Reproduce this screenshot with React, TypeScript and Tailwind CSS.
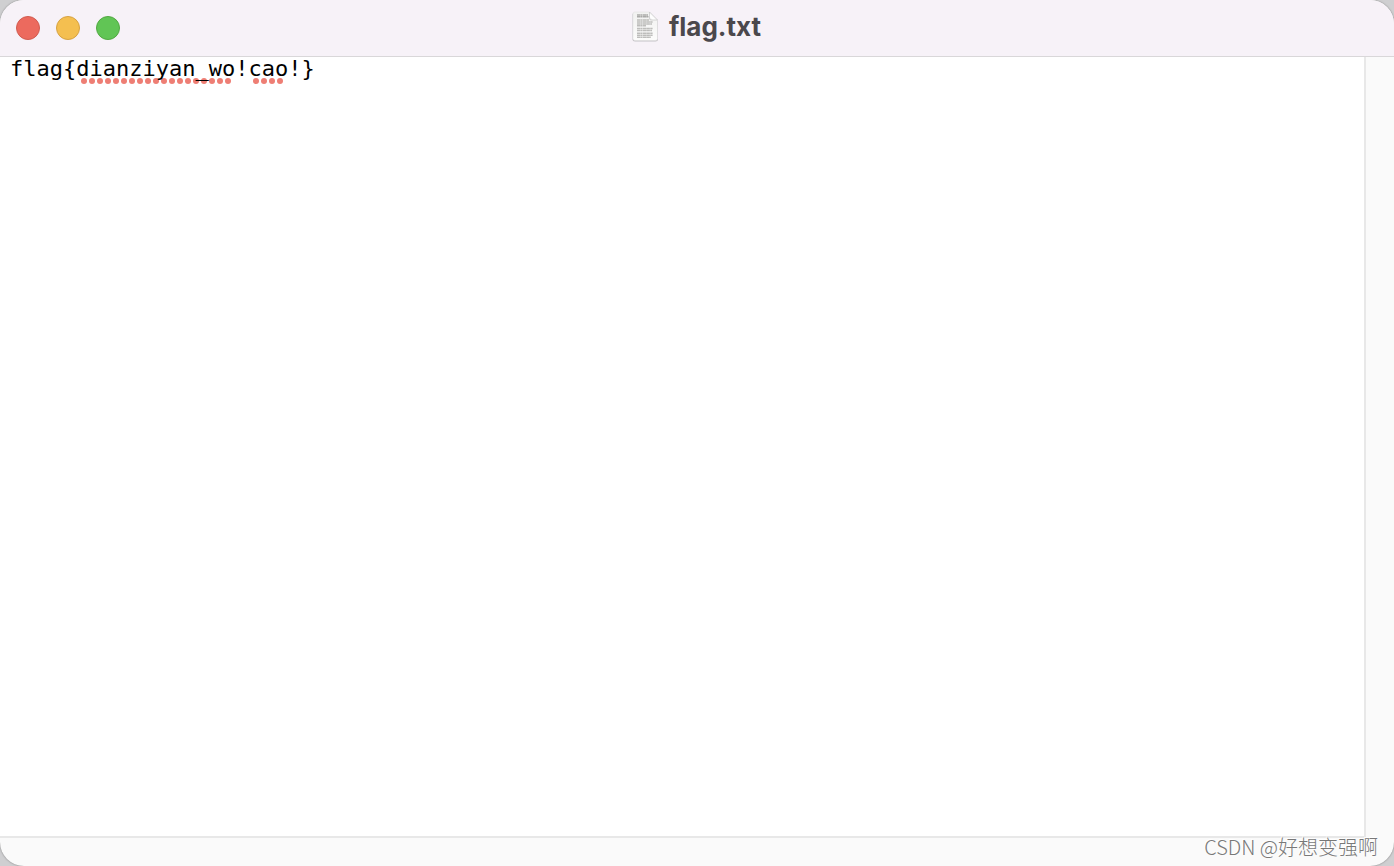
import { useState } from "react";

const lights = [
  { label: "Close", style: "bg-[#ec6a5e] border-[#d05c50]" },
  { label: "Minimize", style: "bg-[#f4bf50] border-[#d6a243]" },
  { label: "Zoom", style: "bg-[#61c555] border-[#52a842]" },
];

function Dots({ count }: { count: number }) {
  return (
    <svg width={count * 8 - 2} height="6" fill="#ee7e74" aria-hidden="true">
      {Array.from({ length: count }, (_, i) => (
        <circle key={i} cx={3 + i * 8} cy="3" r="3" />
      ))}
    </svg>
  );
}

function DocumentIcon() {
  return (
    <svg width="28" height="32" viewBox="0 0 28 32" aria-hidden="true">
      <defs>
        <linearGradient id="page" x1="0" y1="0" x2="0" y2="1">
          <stop offset="0" stopColor="#f1f1f0" />
          <stop offset="1" stopColor="#fcfcfb" />
        </linearGradient>
        <linearGradient id="fold" x1="0" y1="1" x2="1" y2="0">
          <stop offset="0" stopColor="#d2d2d2" />
          <stop offset="0.25" stopColor="#ffffff" />
          <stop offset="0.6" stopColor="#f8f8f8" />
        </linearGradient>
      </defs>
      <path d="M3 2H18.500L27 10V28.500Q27 30.500 24.500 30.500H4Q1.500 30.500 1.500 28.500V3.500Q1.500 2 3 2Z" fill="#c4c2c5" />
      <path d="M3.500 1H18.500L26.500 9V27.500Q26.500 29.500 24.500 29.500H4Q2 29.500 2 27.500V2.500Q2 1 3.500 1Z" fill="url(#page)" stroke="#dedcde" strokeWidth="0.5" />
      <g stroke="#bdbdbb" strokeWidth="1.400" strokeDasharray="3 .3 2 .4 4 .2">
        <path d="M6 4H17M6 5.800H17.500" stroke="#aaaaa8" />
        <path d="M6 9H18M6 11H22M6 13H21M6 14.800H15M6 17.500H22M6 19.500H21M6 22.300H22M6 24.300H22M6 26.200H20" />
      </g>
      <path d="M18.500 1V7.500Q18.500 9 20 9H26.500Z" fill="url(#fold)" stroke="#bebebe" strokeWidth="0.600" />
    </svg>
  );
}

export default function App() {
  const [text, setText] = useState("flag{dianziyan_wo!cao!}");
  return (
    <div className="min-h-screen bg-[#cfcfd1] flex">
      <main className="relative flex flex-1 flex-col overflow-hidden rounded-[24px] bg-[#fafafa] shadow-[0_0_2px_#777]">
        <header className="grid h-[57px] grid-cols-[1fr_auto_1fr] items-center border-b border-[#d9d7d9] bg-[#f7f2f8] px-4">
          <div className="flex gap-4">
            {lights.map((light) => (
              <button
                key={light.label}
                type="button"
                aria-label={light.label}
                className={`size-6 rounded-full border ${light.style}`}
              />
            ))}
          </div>
          <div className="flex items-center gap-[10px] pr-[2px] pb-[2px]">
            <DocumentIcon />
            <h1 className="font-['Inter',sans-serif] text-[26px] leading-8 font-bold text-[#4b484c]">flag.txt</h1>
          </div>
        </header>
        <div className="flex flex-1 flex-col pr-7 pb-7">
          <div className="grid flex-1 border-r-2 border-b-2 border-[#e8e8e8] bg-white">
            <div className="col-start-1 row-start-1 flex items-start gap-[22px] pt-[21px] pl-[81px]">
              <Dots count={19} />
              <Dots count={4} />
            </div>
            <textarea
              aria-label="flag.txt"
              spellCheck={false}
              value={text}
              onChange={(event) => setText(event.target.value)}
              className="z-10 col-start-1 row-start-1 resize-none bg-transparent px-[10px] font-['DejaVu_Sans_Mono',monospace] text-[22px] leading-6 text-black outline-none"
            />
          </div>
        </div>
        <p className="absolute right-4 bottom-[5px] font-['Noto_Sans_CJK_SC',sans-serif] text-[20px] leading-7 font-light text-[#787878] [text-shadow:-1px_-1px_0_#ffffff]">
          CSDN @好想变强啊
        </p>
      </main>
    </div>
  );
}
